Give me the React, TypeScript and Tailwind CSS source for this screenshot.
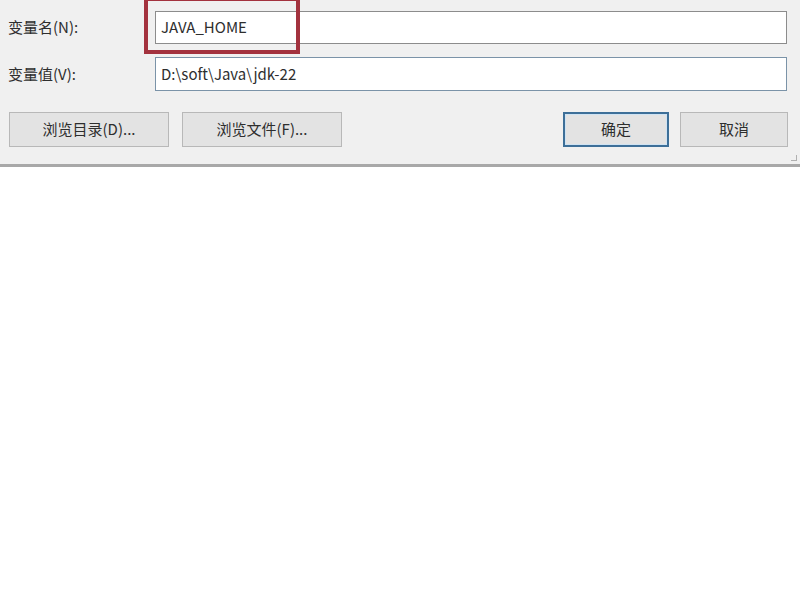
// Windows "edit environment variable" dialog (bottom part), with an annotation box
const FONT = "font-['Microsoft_YaHei','Noto_Sans_CJK_SC',sans-serif]";

function DlgButton({ label, w, primary }: { label: string; w: string; primary?: boolean }) {
  return (
    <button
      className={`${w} h-[35px] flex items-center justify-center text-[15px] text-[#2e2e2e] bg-[#e3e3e3] ${
        primary ? "border-2 border-[#3d6f98] shadow-[inset_0_0_0_1px_#cfe3f3]" : "border border-[#b8b8b8]"
      }`}
    >
      {label}
    </button>
  );
}

export default function App() {
  return (
    <div className={`w-[800px] h-[600px] bg-white overflow-hidden ${FONT}`}>
      <div className="relative bg-[#f0f0f0] border-b-[3px] border-[#a8a8a8] pt-[11px] pb-[17px]">
        {/* name row */}
        <div className="flex items-center h-[33px]">
          <span className="w-[155px] pl-[8px] text-[15px] text-[#2e2e2e]">变量名(N):</span>
          <div className="w-[632px] h-full bg-white border border-[#8c8c8c] flex items-center pl-[5px] text-[15px] text-[#2e2e2e]">
            JAVA_HOME
          </div>
        </div>
        {/* value row */}
        <div className="flex items-center h-[34px] mt-[13px]">
          <span className="w-[155px] pl-[8px] text-[15px] text-[#2e2e2e]">变量值(V):</span>
          <div className="w-[632px] h-full bg-white border border-[#7b93a8] flex items-center pl-[5px] text-[15px] text-[#2e2e2e]">
            D:\soft\Java\jdk-22
          </div>
        </div>
        {/* buttons */}
        <div className="flex items-center mt-[21px] pl-[9px]">
          <DlgButton label="浏览目录(D)..." w="w-[160px]" />
          <div className="ml-[13px]">
            <DlgButton label="浏览文件(F)..." w="w-[160px]" />
          </div>
          <div className="ml-[221px] flex gap-[11px]">
            <DlgButton label="确定" w="w-[106px]" primary />
            <DlgButton label="取消" w="w-[108px]" />
          </div>
        </div>
        {/* resize grip */}
        <div className="absolute right-[3px] bottom-[3px] w-[6px] h-[6px] border-r border-b border-[#b0b0b0]" />
        {/* red annotation box */}
        <div className="absolute left-[144px] top-[-3px] w-[156px] h-[57px] border-[4px] border-[#a3323e]" />
      </div>
    </div>
  );
}
